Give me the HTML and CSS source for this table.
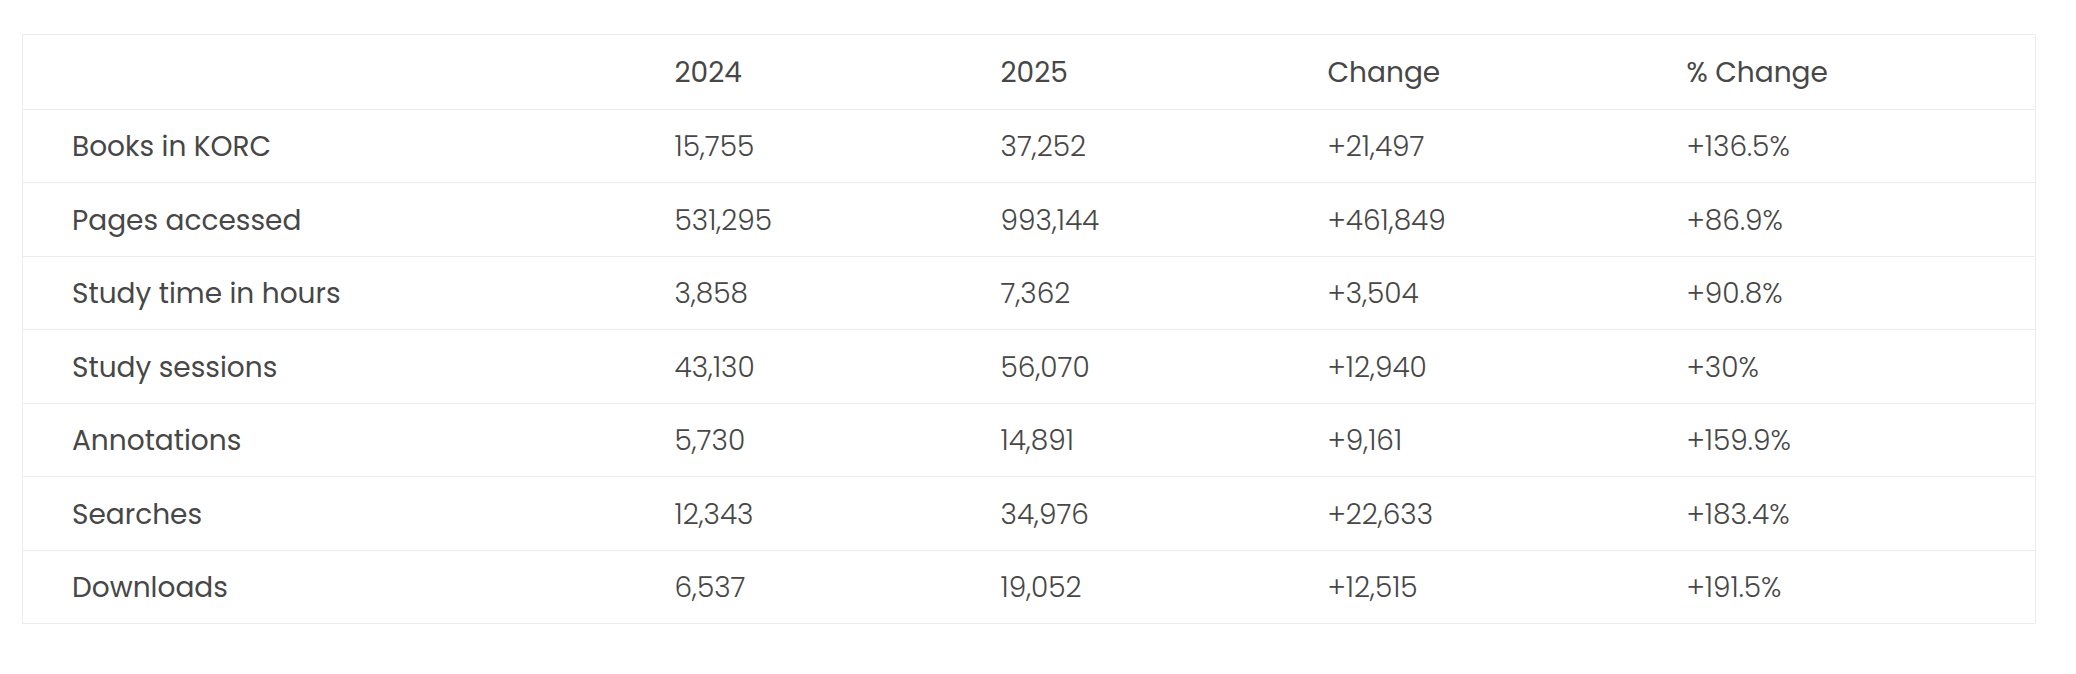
FILE: index.html
```html
<!DOCTYPE html>
<html lang="en">
<head>
<meta charset="utf-8">
<title>KORC usage 2024 vs 2025</title>
<link rel="stylesheet" href="styles.css">
</head>
<body>
<div class="page">
  <table class="stats">
    <colgroup>
      <col class="c-label">
      <col class="c-y1">
      <col class="c-y2">
      <col class="c-chg">
      <col class="c-pct">
    </colgroup>
    <thead>
      <tr><th></th><th>2024</th><th>2025</th><th>Change</th><th>% Change</th></tr>
    </thead>
    <tbody>
      <tr><th>Books in KORC</th><td>15,755</td><td>37,252</td><td>+21,497</td><td>+136.5%</td></tr>
      <tr><th>Pages accessed</th><td>531,295</td><td>993,144</td><td>+461,849</td><td>+86.9%</td></tr>
      <tr><th>Study time in hours</th><td>3,858</td><td>7,362</td><td>+3,504</td><td>+90.8%</td></tr>
      <tr><th>Study sessions</th><td>43,130</td><td>56,070</td><td>+12,940</td><td>+30%</td></tr>
      <tr><th>Annotations</th><td>5,730</td><td>14,891</td><td>+9,161</td><td>+159.9%</td></tr>
      <tr><th>Searches</th><td>12,343</td><td>34,976</td><td>+22,633</td><td>+183.4%</td></tr>
      <tr><th>Downloads</th><td>6,537</td><td>19,052</td><td>+12,515</td><td>+191.5%</td></tr>
    </tbody>
  </table>
</div>
</body>
</html>
```
FILE: styles.css
```css
html, body {
  margin: 0;
  padding: 0;
  background: #ffffff;
}
.page {
  padding: 34px 40px 0 22px;
  font-family: "Poppins", "Inter", "Open Sans", sans-serif;
  color: #474747;
}
.stats {
  width: 2014px;
  border-collapse: collapse;
  table-layout: fixed;
  border: 1px solid #ececec;
}
.c-label { width: 603px; }
.c-y1 { width: 326px; }
.c-y2 { width: 327px; }
.c-chg { width: 359px; }
.c-pct { width: 398px; }
.stats th,
.stats td {
  height: 73.5px;
  padding: 3px 0 0 49px;
  text-align: left;
  vertical-align: middle;
  border-top: 1px solid #ececec;
  box-sizing: border-box;
  font-size: 28px;
  line-height: 1.2;
  white-space: nowrap;
}
.stats thead th {
  height: 74.5px;
}
.stats th {
  font-weight: 400;
}
.stats td {
  font-weight: 300;
}
```
